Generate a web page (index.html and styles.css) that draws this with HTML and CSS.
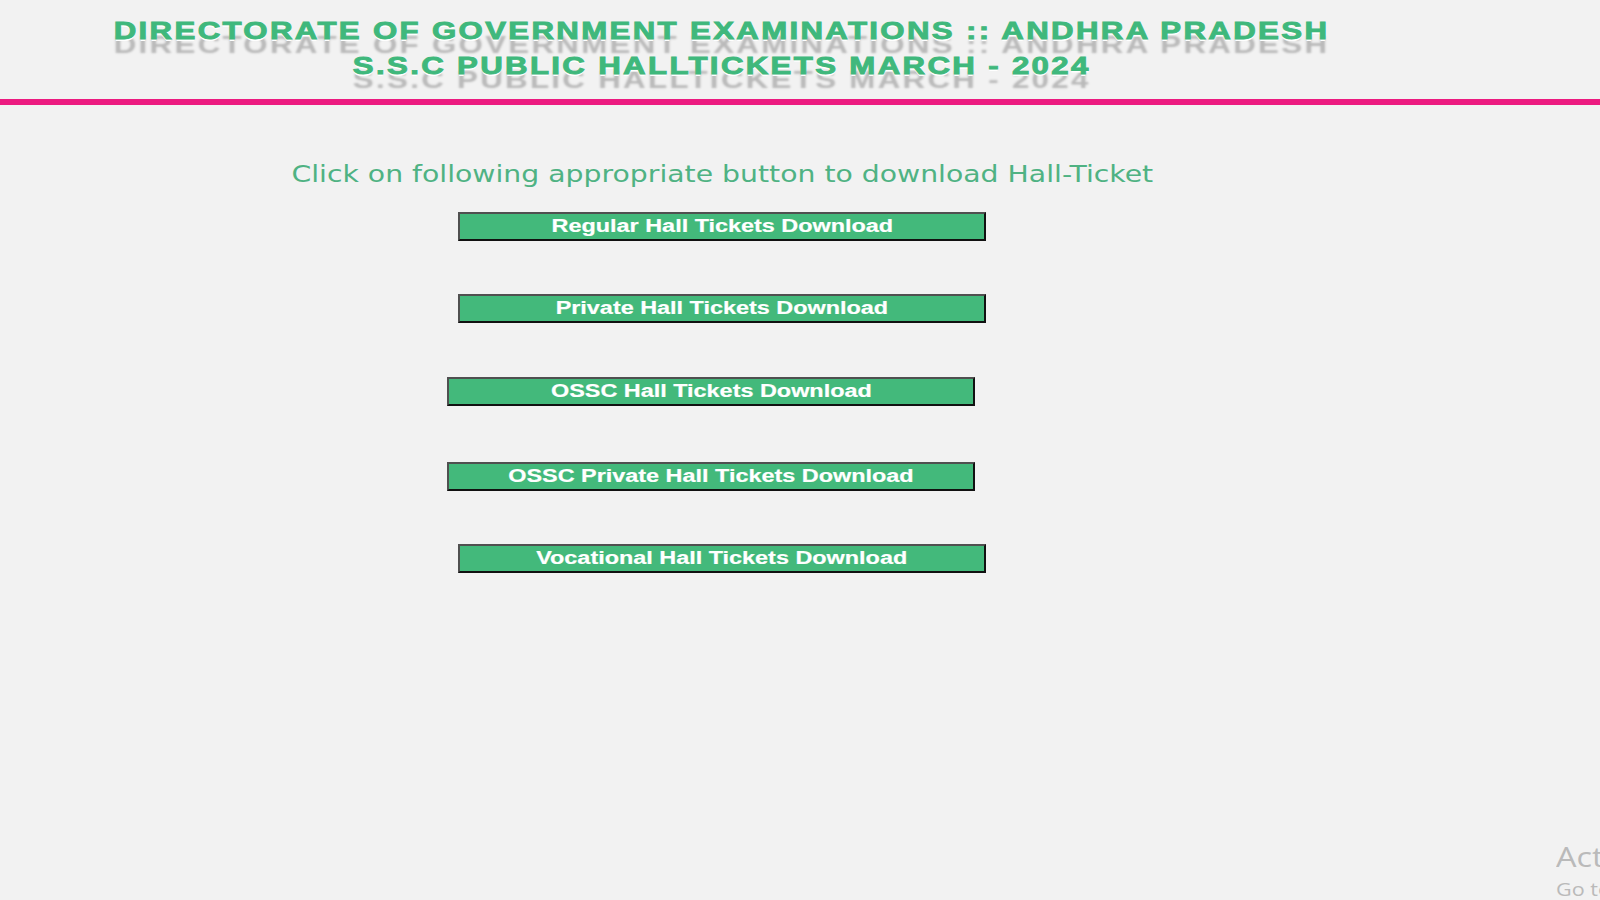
FILE: index.html
```html
<!DOCTYPE html>
<html lang="en">
<head>
<meta charset="utf-8">
<title>S.S.C Public Halltickets March - 2024</title>
<link rel="stylesheet" href="styles.css">
</head>
<body>
  <header class="masthead">
    <h1 class="title">
      <span class="title-line">DIRECTORATE OF GOVERNMENT EXAMINATIONS :: ANDHRA PRADESH</span>
      <span class="title-line">S.S.C PUBLIC HALLTICKETS MARCH - 2024</span>
    </h1>
  </header>
  <div class="rule"></div>
  <main class="content">
    <p class="lead"><span class="lead-text">Click on following appropriate button to download Hall-Ticket</span></p>
    <div class="buttons">
      <div class="btn-row"><a class="btn" href="#"><span class="btn-text">Regular Hall Tickets Download</span></a></div>
      <div class="btn-row"><a class="btn" href="#"><span class="btn-text">Private Hall Tickets Download</span></a></div>
      <div class="btn-row btn-row-left"><a class="btn" href="#"><span class="btn-text">OSSC Hall Tickets Download</span></a></div>
      <div class="btn-row btn-row-left"><a class="btn" href="#"><span class="btn-text">OSSC Private Hall Tickets Download</span></a></div>
      <div class="btn-row"><a class="btn" href="#"><span class="btn-text">Vocational Hall Tickets Download</span></a></div>
    </div>
  </main>
  <div class="watermark">
    <div class="wm-title">Activate Windows</div>
    <div class="wm-sub">Go to Settings to activate Windows.</div>
  </div>
</body>
</html>
```

FILE: styles.css
```css
html,
body {
  margin: 0;
  padding: 0;
  overflow: hidden;
  background: #f2f2f2;
}

body {
  width: 1600px;
  height: 900px;
  position: relative;
}

.masthead {
  width: 1444px;
  padding: 13px 0 16px;
}

.title {
  margin: 0;
  display: flex;
  flex-direction: column;
  align-items: center;
  font-family: "Liberation Sans", Arial, sans-serif;
  font-weight: bold;
  font-size: 24px;
  line-height: 35px;
  letter-spacing: 1.8px;
  color: #3fb87c;
  -webkit-text-stroke: 0.9px #3fb87c;
  text-shadow: 0 2px 0 #ffffff, 0 14px 2px rgba(0, 0, 0, 0.24);
}

.title-line {
  display: inline-block;
  white-space: nowrap;
  transform: scaleX(1.3);
}

.rule {
  height: 6px;
  background: #ec1b80;
}

.content {
  width: 1444px;
}

.lead {
  margin: 55px 0 0;
  text-align: center;
  font-family: "DejaVu Sans", Verdana, sans-serif;
  font-size: 23px;
  line-height: 28px;
  color: #4fb283;
}

.lead-text {
  display: inline-block;
  white-space: nowrap;
  transform: scaleX(1.23);
}

.buttons {
  display: flex;
  flex-direction: column;
  margin-top: 24px;
}

.btn-row {
  display: flex;
  justify-content: center;
}

.btn-row:nth-child(2) {
  margin-top: 53px;
}

.btn-row:nth-child(3) {
  margin-top: 54px;
}

.btn-row:nth-child(4) {
  margin-top: 56px;
}

.btn-row:nth-child(5) {
  margin-top: 53px;
}

.btn-row-left {
  padding-right: 22px;
}

.btn {
  box-sizing: border-box;
  width: 528px;
  height: 29px;
  display: flex;
  align-items: center;
  justify-content: center;
  background: #43b97b;
  border-style: solid;
  border-width: 2px;
  border-color: #505050 #111111 #111111 #505050;
  color: #ffffff;
  text-decoration: none;
  font-family: "Liberation Sans", Arial, sans-serif;
  font-weight: bold;
  font-size: 18px;
  line-height: 25px;
  -webkit-text-stroke: 0.2px #ffffff;
}

.btn-text {
  display: inline-block;
  white-space: nowrap;
  transform: scaleX(1.3);
}

.watermark {
  position: absolute;
  left: 1556px;
  top: 840px;
  white-space: nowrap;
  color: #bababa;
  font-family: "Open Sans", "Noto Sans", sans-serif;
  transform: scaleX(1.2);
  transform-origin: left top;
}

.wm-title {
  font-size: 27px;
  line-height: 34px;
}

.wm-sub {
  font-size: 18px;
  line-height: 24px;
  margin-top: 3px;
}
```
